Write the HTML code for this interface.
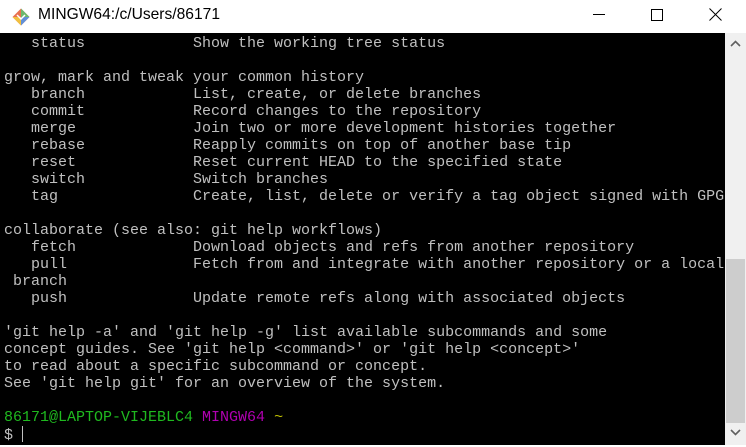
<!DOCTYPE html><html><head><style>
body{margin:0;width:746px;height:447px;overflow:hidden;background:#fff;font-family:"Liberation Sans",sans-serif;position:relative}
.title{position:absolute;left:0;top:0;width:746px;height:33px;background:#fff}
.title span{position:absolute;left:38px;top:6px;font-size:15.6px;color:#000}
.term{position:absolute;left:0;top:33px;width:725px;height:412px;background:#000;overflow:hidden}
pre{margin:0;position:absolute;left:4px;top:2px;font-family:"Liberation Mono",monospace;font-size:15px;line-height:17px;color:#c0c0c0;letter-spacing:0}
.sb{position:absolute;left:725px;top:33px;width:21px;height:412px;background:#f0f0f0}
.thumb{position:absolute;left:1px;top:226px;width:19px;height:164px;background:#cdcdcd}
.g{color:#1fb91f}.m{color:#b000b0}.y{color:#c0c000}
</style></head><body>
<div class="title">
<svg style="position:absolute;left:11px;top:7px" width="20" height="20" viewBox="0 0 20 20">
<rect x="4" y="4" width="12" height="12" transform="rotate(45 10 10)" fill="#e87050"/>
<path d="M10 10 L10 1.5 L18.5 10Z" fill="#6cb86c"/><path d="M10 10 L1.5 10 L10 18.5Z" fill="#f0c040"/><path d="M10 10L18.5 10 10 18.5Z" fill="#6090d8"/>
<path d="M6 8 L10 12 L14 8" stroke="#fff" stroke-width="1.5" fill="none"/></svg>
<span>MINGW64:/c/Users/86171</span>
<div style="position:absolute;left:593px;top:14px;width:12px;height:1px;background:#000"></div>
<div style="position:absolute;left:651px;top:9px;width:10px;height:10px;border:1px solid #000"></div>
<svg style="position:absolute;left:709px;top:8px" width="13" height="13"><path d="M0.5 0.5L12.5 12.5M12.5 0.5L0.5 12.5" stroke="#000" stroke-width="1"/></svg>
</div>
<div class="term"><pre>   status            Show the working tree status

grow, mark and tweak your common history
   branch            List, create, or delete branches
   commit            Record changes to the repository
   merge             Join two or more development histories together
   rebase            Reapply commits on top of another base tip
   reset             Reset current HEAD to the specified state
   switch            Switch branches
   tag               Create, list, delete or verify a tag object signed with GPG

collaborate (see also: git help workflows)
   fetch             Download objects and refs from another repository
   pull              Fetch from and integrate with another repository or a local
 branch
   push              Update remote refs along with associated objects

'git help -a' and 'git help -g' list available subcommands and some
concept guides. See 'git help &lt;command&gt;' or 'git help &lt;concept&gt;'
to read about a specific subcommand or concept.
See 'git help git' for an overview of the system.

<span class="g">86171@LAPTOP-VIJEBLC4</span> <span class="m">MINGW64</span> <span class="y">~</span>
$ <span style="display:inline-block;width:1px;height:16px;background:#c0c0c0;vertical-align:-3px"></span></pre></div>
<div class="sb"><div class="thumb"></div>
<svg style="position:absolute;left:5px;top:7px" width="11" height="7"><path d="M1 6L5.5 1.5L10 6" stroke="#606060" stroke-width="1.6" fill="none"/></svg>
<svg style="position:absolute;left:5px;top:396px" width="11" height="7"><path d="M1 1L5.5 5.5L10 1" stroke="#606060" stroke-width="1.6" fill="none"/></svg>
</div>
</body></html>
